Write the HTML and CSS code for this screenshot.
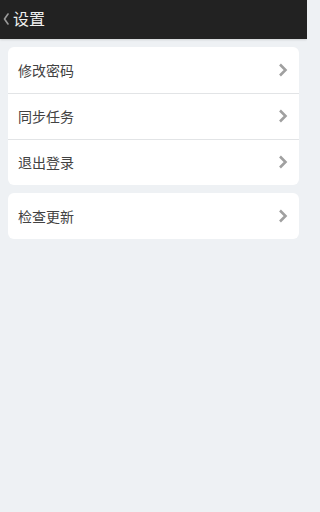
FILE: index.html
```html
<!DOCTYPE html>
<html lang="zh">
<head>
<meta charset="utf-8">
<meta name="viewport" content="width=307">
<title>设置</title>
<link rel="stylesheet" href="styles.css">
</head>
<body>
<header class="topbar">
  <svg class="back" width="6" height="12" viewBox="0 0 6 12"><path d="M5 1 L1.5 6 L5 11" fill="none" stroke="#9a9a9a" stroke-width="1.6" stroke-linecap="round" stroke-linejoin="round"/></svg>
  <span class="title">设置</span>
</header>
<main class="content">
  <section class="card">
    <div class="row"><span class="label">修改密码</span><svg class="chev" width="10" height="14" viewBox="0 0 10 14"><path d="M2 1.5 L7.5 7 L2 12.5" fill="none" stroke="#a0a0a0" stroke-width="2.6" stroke-linejoin="miter"/></svg></div>
    <div class="row"><span class="label">同步任务</span><svg class="chev" width="10" height="14" viewBox="0 0 10 14"><path d="M2 1.5 L7.5 7 L2 12.5" fill="none" stroke="#a0a0a0" stroke-width="2.6" stroke-linejoin="miter"/></svg></div>
    <div class="row"><span class="label">退出登录</span><svg class="chev" width="10" height="14" viewBox="0 0 10 14"><path d="M2 1.5 L7.5 7 L2 12.5" fill="none" stroke="#a0a0a0" stroke-width="2.6" stroke-linejoin="miter"/></svg></div>
  </section>
  <section class="card">
    <div class="row"><span class="label">检查更新</span><svg class="chev" width="10" height="14" viewBox="0 0 10 14"><path d="M2 1.5 L7.5 7 L2 12.5" fill="none" stroke="#a0a0a0" stroke-width="2.6" stroke-linejoin="miter"/></svg></div>
  </section>
</main>
</body>
</html>
```
FILE: styles.css
```css
html {
  background: #eef1f4;
}
html, body {
  margin: 0;
  padding: 0;
}
body {
  background: #eef1f4;
  font-family: "Noto Sans CJK SC", "Noto Sans", sans-serif;
  width: 307px;
  min-height: 512px;
}
.topbar {
  height: 39px;
  background: #222222;
  display: flex;
  align-items: center;
  gap: 4px;
  padding: 0 0 3px 3px;
  box-sizing: border-box;
  box-shadow: 0 1px 2px rgba(0,0,0,0.12);
}
.back {
  display: block;
  margin-top: 1px;
}
.title {
  color: #f0f0f0;
  font-size: 16px;
  line-height: 1;
}
.content {
  padding: 8px;
  display: flex;
  flex-direction: column;
  gap: 8px;
}
.card {
  background: #ffffff;
  border-radius: 6px;
  overflow: hidden;
}
.row {
  height: 46px;
  box-sizing: border-box;
  display: flex;
  align-items: center;
  justify-content: space-between;
  padding: 0 11px 1px 10px;
}
.row + .row {
  border-top: 1px solid #e2e4e6;
}
.label {
  font-size: 14px;
  line-height: 1;
  color: #424242;
}
.chev {
  display: block;
}
```
